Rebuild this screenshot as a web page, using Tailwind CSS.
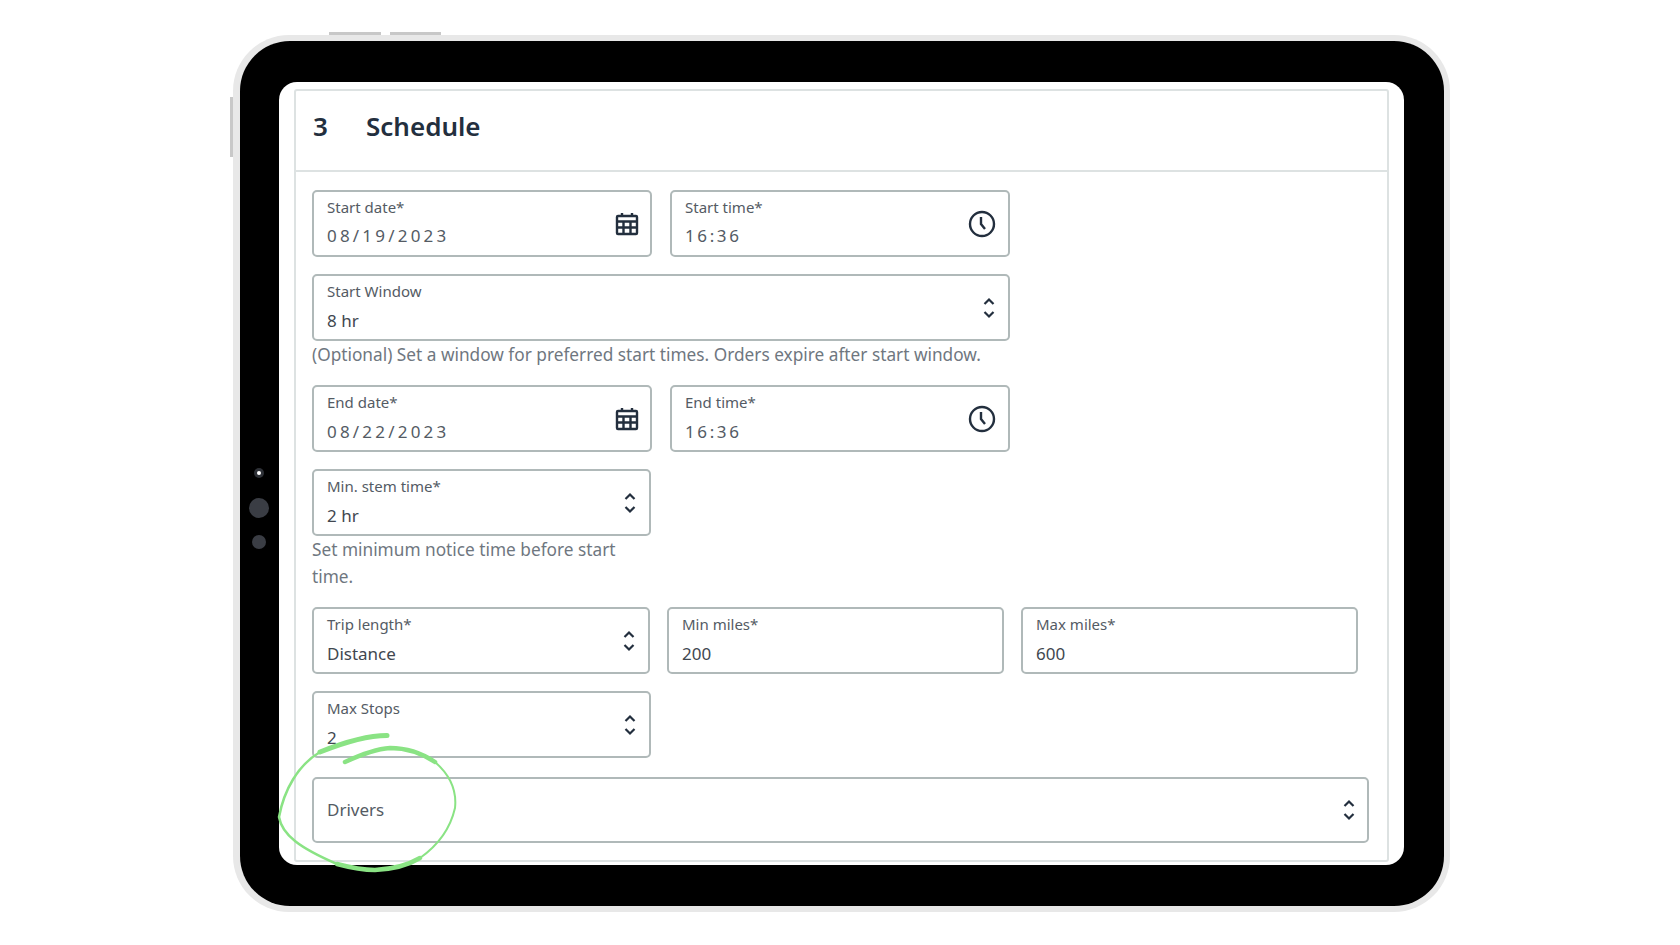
<!DOCTYPE html>
<html lang="en">
<head>
    <meta charset="UTF-8">
    <meta name="viewport" content="width=device-width, initial-scale=1.0">
    <title>Schedule</title>
    <script src="https://cdn.jsdelivr.net/npm/@tailwindcss/browser@4"></script>
</head>
<body class="bg-white w-[1680px] h-[945px] overflow-hidden relative font-['Noto_Sans',sans-serif]">
    <!-- tablet buttons -->
    <div class="absolute left-[329px] top-[32px] w-[52px] h-[3px] bg-[#c8c8c8]"></div>
    <div class="absolute left-[390px] top-[32px] w-[51px] h-[3px] bg-[#c8c8c8]"></div>
    <div class="absolute left-[230px] top-[97px] w-[3px] h-[60px] bg-[#c8c8c8]"></div>

    <div class="ml-[233px] mt-[35px] w-[1217px] h-[877px] bg-[#e8e8e8] rounded-[56px] pt-[6px] pb-[6px] pl-[7px] pr-[6px]">
        <div class="relative w-full h-full bg-black rounded-[50px] pt-[41px] pb-[41px] pl-[39px] pr-[40px]">
            <!-- cameras -->
            <div class="absolute left-[14px] top-[427px] w-[10px] h-[10px] rounded-full bg-[#2d3036] flex items-center justify-center"><div class="w-[4px] h-[4px] rounded-full bg-white"></div></div>
            <div class="absolute left-[9px] top-[457px] w-[20px] h-[20px] rounded-full bg-[#3a3d44]"></div>
            <div class="absolute left-[12px] top-[494px] w-[14px] h-[14px] rounded-full bg-[#3a3d44]"></div>

            <div class="w-full h-full bg-white rounded-[18px] pt-[7px] pl-[15px] pr-[15px] pb-[3px]">
                <section class="h-full border-2 border-[#dde2e2] rounded-[3px] overflow-hidden">
                    <header class="h-[81px] border-b-2 border-[#dde2e2] flex items-center pl-[17px] pb-[8px] text-[#232f3e] text-[26px] font-semibold">
                        <span class="w-[53px]">3</span>
                        <h2>Schedule</h2>
                    </header>

                    <div class="pt-[18px] pl-[16px] text-[17px]">
                        <!-- start date / time -->
                        <div class="flex gap-[18px]">
                            <div class="w-[340px] h-[67px] border-2 border-[#b0b9b9] rounded-[5px] pl-[13px] pr-[11px] pb-[4px] flex items-center justify-between">
                                <div>
                                    <div class="text-[15px] leading-[20px] text-[#545b64]">Start date*</div>
                                    <div class="mt-[9px] leading-[20px] text-[#545b64] tracking-[3.2px]">08/19/2023</div>
                                </div>
                                <svg class="w-[24px] h-[24px] mt-[4px] text-[#232f3e]" viewBox="0 0 24 24" fill="none" stroke="currentColor" stroke-width="2.4"><rect x="2" y="4" width="20" height="18" rx="1"/><path d="M2 9.5h20M2 15.5h20M8.5 9v13M15.5 9v13M7 1v4M17 1v4"/></svg>
                            </div>
                            <div class="w-[340px] h-[67px] border-2 border-[#b0b9b9] rounded-[5px] pl-[13px] pr-[12px] pb-[4px] flex items-center justify-between">
                                <div>
                                    <div class="text-[15px] leading-[20px] text-[#545b64]">Start time*</div>
                                    <div class="mt-[9px] leading-[20px] text-[#545b64] tracking-[2.6px]">16:36</div>
                                </div>
                                <svg class="w-[28px] h-[28px] mt-[4px] text-[#232f3e]" viewBox="0 0 28 28" fill="none" stroke="currentColor" stroke-width="2.4"><circle cx="14" cy="14" r="12"/><path d="M13 7v7l4 5"/></svg>
                            </div>
                        </div>

                        <!-- start window -->
                        <div class="mt-[17px] w-[698px] h-[67px] border-2 border-[#b0b9b9] rounded-[5px] pl-[13px] pr-[13px] pb-[4px] flex items-center justify-between">
                            <div>
                                <div class="text-[15px] leading-[20px] text-[#545b64]">Start Window</div>
                                <div class="mt-[10px] leading-[20px] text-[#414750]">8 hr</div>
                            </div>
                            <svg class="w-[12px] h-[22px] mt-[4px] text-[#232f3e]" viewBox="0 0 12 22" fill="none" stroke="currentColor" stroke-width="2.2"><path d="M1.5 7L6 2.5L10.5 7M1.5 15L6 19.5L10.5 15"/></svg>
                        </div>
                        <p class="leading-[27px] text-[17.25px] text-[#6f777f]">(Optional) Set a window for preferred start times. Orders expire after start window.</p>

                        <!-- end date / time -->
                        <div class="mt-[17px] flex gap-[18px]">
                            <div class="w-[340px] h-[67px] border-2 border-[#b0b9b9] rounded-[5px] pl-[13px] pr-[11px] pb-[4px] flex items-center justify-between">
                                <div>
                                    <div class="text-[15px] leading-[20px] text-[#545b64]">End date*</div>
                                    <div class="mt-[10px] leading-[20px] text-[#545b64] tracking-[3.2px]">08/22/2023</div>
                                </div>
                                <svg class="w-[24px] h-[24px] mt-[4px] text-[#232f3e]" viewBox="0 0 24 24" fill="none" stroke="currentColor" stroke-width="2.4"><rect x="2" y="4" width="20" height="18" rx="1"/><path d="M2 9.5h20M2 15.5h20M8.5 9v13M15.5 9v13M7 1v4M17 1v4"/></svg>
                            </div>
                            <div class="w-[340px] h-[67px] border-2 border-[#b0b9b9] rounded-[5px] pl-[13px] pr-[12px] pb-[4px] flex items-center justify-between">
                                <div>
                                    <div class="text-[15px] leading-[20px] text-[#545b64]">End time*</div>
                                    <div class="mt-[10px] leading-[20px] text-[#545b64] tracking-[2.6px]">16:36</div>
                                </div>
                                <svg class="w-[28px] h-[28px] mt-[4px] text-[#232f3e]" viewBox="0 0 28 28" fill="none" stroke="currentColor" stroke-width="2.4"><circle cx="14" cy="14" r="12"/><path d="M13 7v7l4 5"/></svg>
                            </div>
                        </div>

                        <!-- min stem time -->
                        <div class="mt-[17px] w-[339px] h-[67px] border-2 border-[#b0b9b9] rounded-[5px] pl-[13px] pr-[13px] pb-[4px] flex items-center justify-between">
                            <div>
                                <div class="text-[15px] leading-[20px] text-[#545b64]">Min. stem time*</div>
                                <div class="mt-[10px] leading-[20px] text-[#414750]">2 hr</div>
                            </div>
                            <svg class="w-[12px] h-[22px] mt-[4px] text-[#232f3e]" viewBox="0 0 12 22" fill="none" stroke="currentColor" stroke-width="2.2"><path d="M1.5 7L6 2.5L10.5 7M1.5 15L6 19.5L10.5 15"/></svg>
                        </div>
                        <p class="w-[320px] leading-[27px] text-[17.25px] text-[#6f777f]">Set minimum notice time before start time.</p>

                        <!-- trip length / miles -->
                        <div class="mt-[17px] flex gap-[17px]">
                            <div class="w-[338px] h-[67px] border-2 border-[#b0b9b9] rounded-[5px] pl-[13px] pr-[13px] pb-[4px] flex items-center justify-between">
                                <div>
                                    <div class="text-[15px] leading-[20px] text-[#545b64]">Trip length*</div>
                                    <div class="mt-[10px] leading-[20px] text-[#414750]">Distance</div>
                                </div>
                                <svg class="w-[12px] h-[22px] mt-[4px] text-[#232f3e]" viewBox="0 0 12 22" fill="none" stroke="currentColor" stroke-width="2.2"><path d="M1.5 7L6 2.5L10.5 7M1.5 15L6 19.5L10.5 15"/></svg>
                            </div>
                            <div class="w-[337px] h-[67px] border-2 border-[#b0b9b9] rounded-[5px] pl-[13px] pb-[4px] flex items-center">
                                <div>
                                    <div class="text-[15px] leading-[20px] text-[#545b64]">Min miles*</div>
                                    <div class="mt-[10px] leading-[20px] text-[#414750]">200</div>
                                </div>
                            </div>
                            <div class="w-[337px] h-[67px] border-2 border-[#b0b9b9] rounded-[5px] pl-[13px] pb-[4px] flex items-center">
                                <div>
                                    <div class="text-[15px] leading-[20px] text-[#545b64]">Max miles*</div>
                                    <div class="mt-[10px] leading-[20px] text-[#414750]">600</div>
                                </div>
                            </div>
                        </div>

                        <!-- max stops -->
                        <div class="mt-[17px] w-[339px] h-[67px] border-2 border-[#b0b9b9] rounded-[5px] pl-[13px] pr-[13px] pb-[4px] flex items-center justify-between">
                            <div>
                                <div class="text-[15px] leading-[20px] text-[#545b64]">Max Stops</div>
                                <div class="mt-[10px] leading-[20px] text-[#414750]">2</div>
                            </div>
                            <svg class="w-[12px] h-[22px] mt-[4px] text-[#232f3e]" viewBox="0 0 12 22" fill="none" stroke="currentColor" stroke-width="2.2"><path d="M1.5 7L6 2.5L10.5 7M1.5 15L6 19.5L10.5 15"/></svg>
                        </div>

                        <!-- drivers -->
                        <div class="mt-[19px] w-[1057px] h-[66px] border-2 border-[#b0b9b9] rounded-[5px] pl-[13px] pr-[12px] flex items-center justify-between">
                            <div class="text-[#545b64]">Drivers</div>
                            <svg class="w-[12px] h-[22px] text-[#232f3e]" viewBox="0 0 12 22" fill="none" stroke="currentColor" stroke-width="2.2"><path d="M1.5 7L6 2.5L10.5 7M1.5 15L6 19.5L10.5 15"/></svg>
                        </div>
                    </div>
                </section>
            </div>
        </div>
    </div>

    <!-- green hand drawn circle -->
    <svg class="absolute left-0 top-0 w-[1680px] h-[945px] pointer-events-none" viewBox="0 0 1680 945" fill="none" stroke="#8ae384" stroke-linecap="round">
        <path d="M387 735.5C372 735.5 350 740 320 752" stroke-width="5"/>
        <path d="M320 752C298 765 284 790 279 817C282 835 300 848 337 864" stroke-width="2.5"/>
        <path d="M337 864C352 868 365 870 375 870C395 869 410 864 420 858" stroke-width="4.5"/>
        <path d="M420 858C437 846 450 830 455 808C457 790 450 775 435 762" stroke-width="2"/>
        <path d="M435 762C420 752 405 748 390 748C375 749 360 755 345 762" stroke-width="4.5"/>
    </svg>
</body>
</html>
